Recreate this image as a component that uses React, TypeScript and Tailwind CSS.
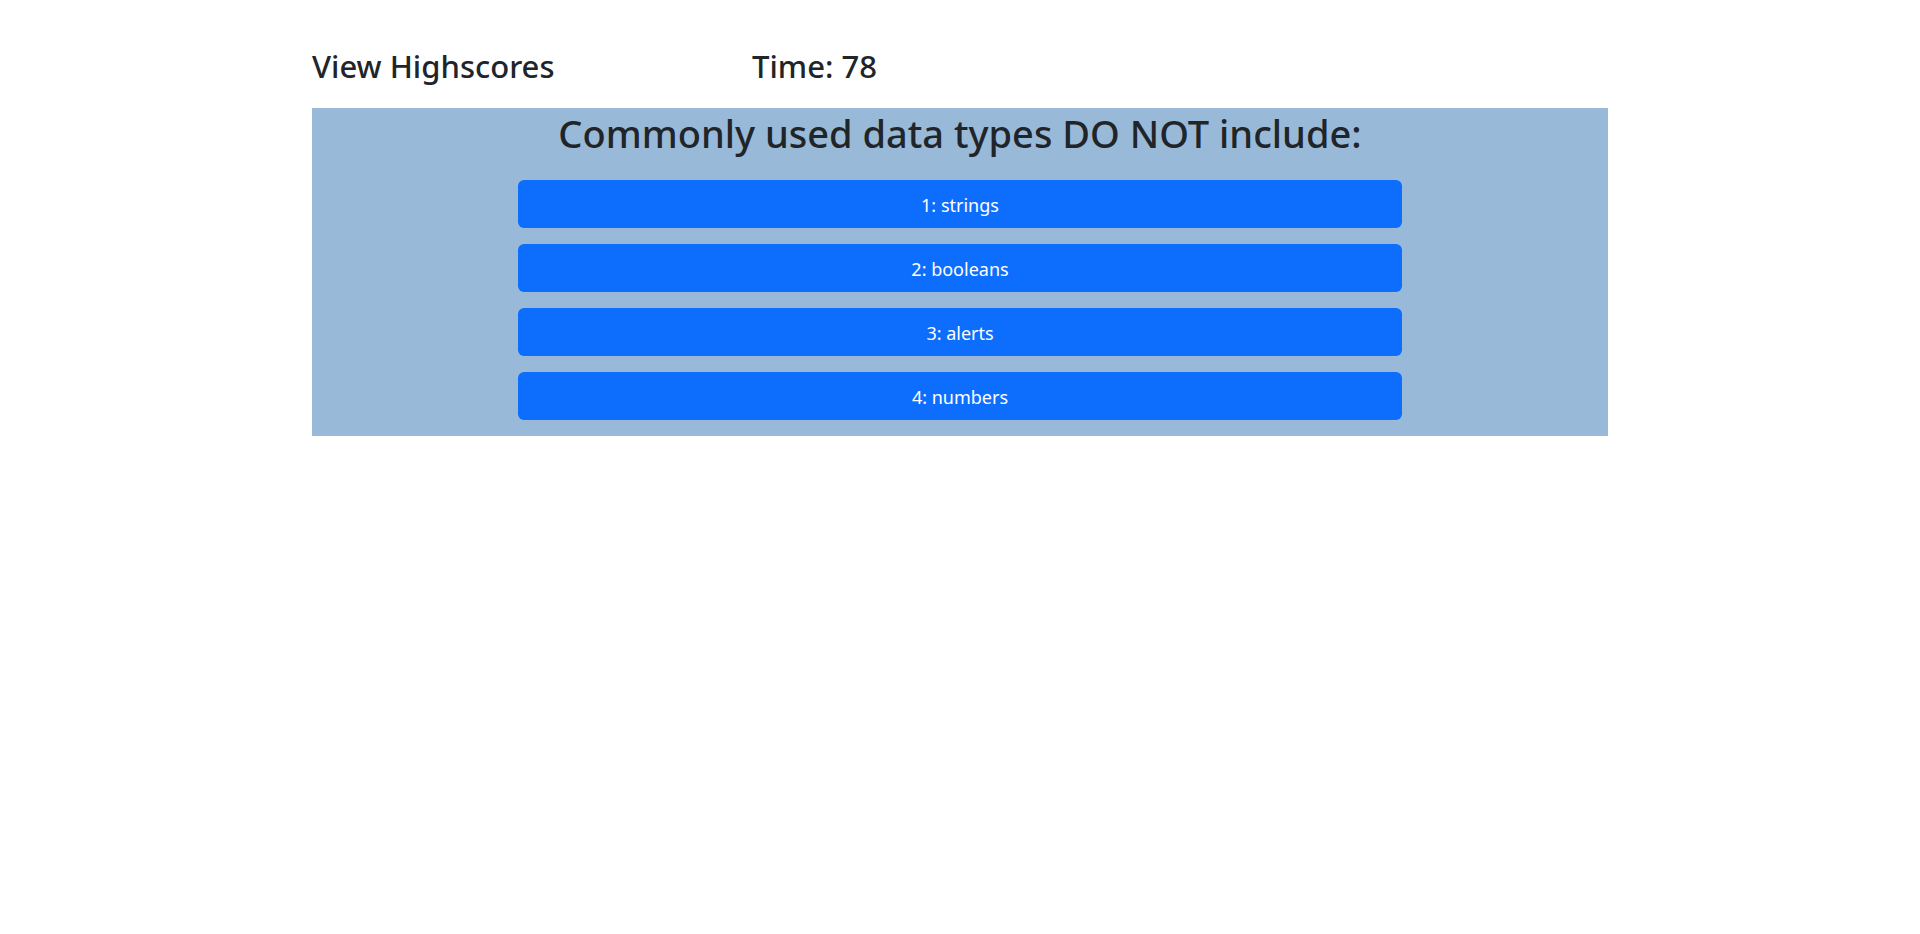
import React from "react";

const answers = ["1: strings", "2: booleans", "3: alerts", "4: numbers"];

export default function App() {
  return (
    <div
      className="min-h-[934px] w-full bg-white text-[#212529]"
      style={{ fontFamily: '"Noto Sans", "Open Sans", sans-serif' }}
    >
      <div className="mx-auto w-[1296px] pt-[46px]">
        <div className="flex h-[40px] items-center text-[31px] font-medium leading-[40px]">
          <span className="w-[440px]">View Highscores</span>
          <span>Time: 78</span>
        </div>
        <div className="mt-[22px] bg-[#98bad8] pb-[16px]">
          <h1 className="h-[56px] pt-[1px] text-center text-[38px] font-medium leading-[48px]">
            Commonly used data types DO NOT include:
          </h1>
          <div className="mt-[16px] flex flex-col items-center gap-[16px]">
            {answers.map((a) => (
              <button
                key={a}
                className="h-[48px] w-[884px] rounded-[6px] bg-[#0d6efd] pt-[2px] text-[18px] text-white"
              >
                {a}
              </button>
            ))}
          </div>
        </div>
      </div>
    </div>
  );
}
